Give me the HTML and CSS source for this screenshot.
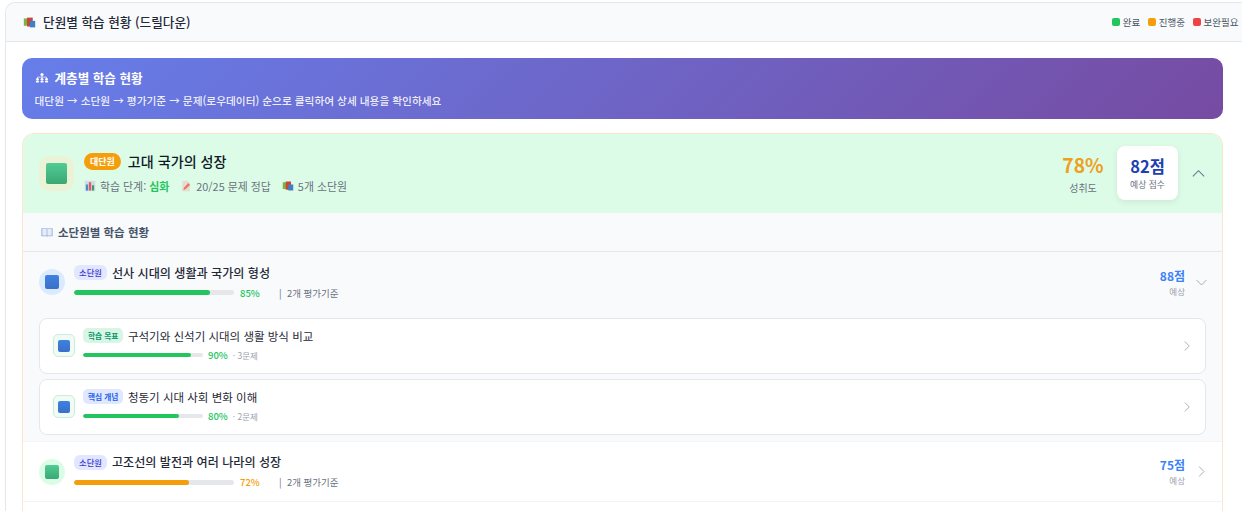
FILE: index.html
```html
<!DOCTYPE html>
<html lang="ko">
<head>
<meta charset="utf-8">
<title>단원별 학습 현황</title>
<link rel="stylesheet" href="styles.css">
</head>
<body>
<svg class="defs" width="0" height="0" aria-hidden="true">
  <symbol id="books" viewBox="0 0 16 16">
    <rect x="1" y="3" width="7" height="9" fill="#7cb342"/>
    <rect x="5" y="2" width="7" height="11" fill="#c8443c"/>
    <rect x="8.500" y="6" width="6.500" height="8" fill="#3f7fc4"/>
  </symbol>
  <symbol id="chart" viewBox="0 0 16 16">
    <rect x="1" y="1" width="14" height="14" rx="1" fill="#d3dbe3"/>
    <rect x="2.500" y="6" width="3" height="8" fill="#3f8fc8"/>
    <rect x="6.500" y="3" width="3" height="11" fill="#dc5a6a"/>
    <rect x="10.500" y="7" width="3" height="7" fill="#3f9d72"/>
  </symbol>
  <symbol id="memo" viewBox="0 0 16 16">
    <path d="M3 1h7l3 3v11H3z" fill="#e4dcd6"/>
    <path d="M4.500 13.500l1-3.500 5.500-6 2.500 2.500-6 5.500z" fill="#ea7a5c"/>
  </symbol>
  <symbol id="book" viewBox="0 0 16 16">
    <path d="M0.500 3h7l.5 .8 .5-.8h7v10.500H9l-1 .8-1-.8H.5z" fill="#8fb4dc"/>
    <path d="M1.800 3.800h5.700v8.700H1.800zM8.500 3.800h5.700v8.700H8.500z" fill="#e9ecf8"/>
  </symbol>
  <symbol id="org" viewBox="0 0 16 16">
    <g fill="#fff">
      <circle cx="8" cy="4" r="1.800"/>
      <circle cx="2.800" cy="9.500" r="1.500"/>
      <circle cx="8" cy="9.500" r="1.500"/>
      <circle cx="13.200" cy="9.500" r="1.500"/>
      <rect x="1" y="11" width="3.600" height="2" rx=".6"/>
      <rect x="6.200" y="11" width="3.600" height="2" rx=".6"/>
      <rect x="11.400" y="11" width="3.600" height="2" rx=".6"/>
    </g>
    <path d="M8 5.500v2.500M2.800 8.500V7h10.400v1.500" fill="none" stroke="#fff" stroke-width=".8"/>
  </symbol>
  <symbol id="up" viewBox="0 0 16 16"><path d="M2 11l6-6 6 6" fill="none" stroke="currentColor" stroke-width="1.100"/></symbol>
  <symbol id="down" viewBox="0 0 16 16"><path d="M2 5l6 6 6-6" fill="none" stroke="currentColor" stroke-width="1.100"/></symbol>
  <symbol id="right" viewBox="0 0 16 16"><path d="M5 2l6 6-6 6" fill="none" stroke="currentColor" stroke-width="1.100"/></symbol>
</svg>

<main class="panel">
  <header class="panel-head">
    <h1 class="panel-title"><svg class="ico-13"><use href="#books"/></svg>단원별 학습 현황 (드릴다운)</h1>
    <ul class="legend">
      <li class="legend-item"><i class="dot dot-green"></i>완료</li>
      <li class="legend-item"><i class="dot dot-orange"></i>진행중</li>
      <li class="legend-item"><i class="dot dot-red"></i>보완필요</li>
    </ul>
  </header>

  <div class="panel-body">
    <section class="banner">
      <h2 class="banner-title"><svg class="ico-14"><use href="#org"/></svg>계층별 학습 현황</h2>
      <p class="banner-sub">대단원 → 소단원 → 평가기준 → 문제(로우데이터) 순으로 클릭하여 상세 내용을 확인하세요</p>
    </section>

    <section class="unit">
      <div class="unit-head">
        <div class="unit-icon"><span class="sq sq-green sq-21"></span></div>
        <div class="unit-info">
          <div class="unit-line">
            <span class="tag-main">대단원</span>
            <h3 class="unit-title">고대 국가의 성장</h3>
          </div>
          <div class="unit-meta">
            <span class="meta-item"><svg class="ico-12"><use href="#chart"/></svg>학습 단계: <b class="level">심화</b></span>
            <span class="meta-item"><svg class="ico-12"><use href="#memo"/></svg>20/25 문제 정답</span>
            <span class="meta-item"><svg class="ico-12"><use href="#books"/></svg>5개 소단원</span>
          </div>
        </div>
        <div class="unit-rate">
          <strong class="rate-num">78%</strong>
          <span class="rate-label">성취도</span>
        </div>
        <div class="score-card">
          <strong class="score-num">82점</strong>
          <span class="score-label">예상 점수</span>
        </div>
        <svg class="chev-main"><use href="#up"/></svg>
      </div>

      <div class="section-head"><svg class="ico-12"><use href="#book"/></svg>소단원별 학습 현황</div>

      <div class="sub sub-open">
        <div class="sub-icon sub-icon-blue"><span class="sq sq-blue sq-14"></span></div>
        <div class="sub-info">
          <div class="sub-line">
            <span class="tag-sub">소단원</span>
            <h4 class="sub-title">선사 시대의 생활과 국가의 형성</h4>
          </div>
          <div class="sub-progress">
            <div class="bar bar-sub"><span class="fill fill-green" style="width:85%"></span></div>
            <span class="pct pct-green">85%</span>
            <span class="sub-count">|&nbsp; 2개 평가기준</span>
          </div>
        </div>
        <div class="sub-score"><strong class="sub-num">88점</strong><span class="sub-label">예상</span></div>
        <svg class="chev-sub"><use href="#down"/></svg>
      </div>

      <div class="items">
        <article class="item">
          <div class="item-icon"><span class="sq sq-blue sq-12"></span></div>
          <div class="item-info">
            <div class="item-line">
              <span class="tag-item tag-goal">학습 목표</span>
              <h5 class="item-title">구석기와 신석기 시대의 생활 방식 비교</h5>
            </div>
            <div class="item-progress">
              <div class="bar bar-item"><span class="fill fill-green" style="width:90%"></span></div>
              <span class="pct-item pct-green">90%</span>
              <span class="item-count">· 3문제</span>
            </div>
          </div>
          <svg class="chev-item"><use href="#right"/></svg>
        </article>
        <article class="item">
          <div class="item-icon"><span class="sq sq-blue sq-12"></span></div>
          <div class="item-info">
            <div class="item-line">
              <span class="tag-item tag-core">핵심 개념</span>
              <h5 class="item-title">청동기 시대 사회 변화 이해</h5>
            </div>
            <div class="item-progress">
              <div class="bar bar-item"><span class="fill fill-green" style="width:80%"></span></div>
              <span class="pct-item pct-green">80%</span>
              <span class="item-count">· 2문제</span>
            </div>
          </div>
          <svg class="chev-item"><use href="#right"/></svg>
        </article>
      </div>

      <div class="sub">
        <div class="sub-icon sub-icon-green"><span class="sq sq-green sq-14"></span></div>
        <div class="sub-info">
          <div class="sub-line">
            <span class="tag-sub">소단원</span>
            <h4 class="sub-title">고조선의 발전과 여러 나라의 성장</h4>
          </div>
          <div class="sub-progress">
            <div class="bar bar-sub"><span class="fill fill-orange" style="width:72%"></span></div>
            <span class="pct pct-orange">72%</span>
            <span class="sub-count">|&nbsp; 2개 평가기준</span>
          </div>
        </div>
        <div class="sub-score"><strong class="sub-num">75점</strong><span class="sub-label">예상</span></div>
        <svg class="chev-sub"><use href="#right"/></svg>
      </div>
    </section>
  </div>
</main>
</body>
</html>
```

FILE: styles.css
```css
* { box-sizing: border-box; margin: 0; padding: 0; }
html, body { height: 511px; overflow: hidden; background: #fff; }
body {
  padding: 2px 0 0 5px;
  font-family: "Noto Sans CJK KR", "Noto Sans", sans-serif;
  color: #1f2937;
}
.defs { position: absolute; }
svg { display: block; flex: none; }
.ico-14 { width: 14px; height: 14px; }
.ico-13 { width: 13px; height: 13px; }
.ico-12 { width: 12px; height: 12px; }

.panel {
  width: 1237px;
  height: 509px;
  display: flex;
  flex-direction: column;
  border: 1px solid #e5e7eb;
  border-width: 1px 0 0 1px;
  border-radius: 10px 0 0 0;
  background: #fff;
}
.panel-head {
  height: 39px;
  flex: none;
  display: flex;
  align-items: center;
  justify-content: space-between;
  padding: 0 3.500px 0 17px;
  background: #f8fafc;
  border-bottom: 1px solid #e5e7eb;
  border-radius: 10px 0 0 0;
}
.panel-title {
  display: flex;
  align-items: center;
  gap: 7px;
  font-size: 12.650px;
  font-weight: 500;
  line-height: 18px;
  color: #1f2937;
}
.legend { display: flex; gap: 7.500px; list-style: none; }
.legend-item {
  display: flex;
  align-items: center;
  gap: 3px;
  font-size: 9.500px;
  line-height: 14px;
  color: #4b5563;
}
.dot { width: 8px; height: 8px; border-radius: 2px; }
.dot-green { background: #22c55e; }
.dot-orange { background: #f59e0b; }
.dot-red { background: #ef4444; }

.panel-body {
  flex: 1;
  min-height: 0;
  display: flex;
  flex-direction: column;
  padding: 16px 19px 0 16px;
}

.banner {
  height: 61px;
  flex: none;
  padding: 10px 12.500px;
  border-radius: 10px;
  background: linear-gradient(135deg, #667eea 0%, #764ba2 100%);
  color: #fff;
}
.banner-title {
  display: flex;
  align-items: center;
  gap: 6px;
  font-size: 12.600px;
  font-weight: 700;
  line-height: 20px;
}
.banner-sub {
  margin-top: 4px;
  font-size: 10.700px;
  font-weight: 500;
  line-height: 18px;
  color: rgba(255, 255, 255, .9);
}

.unit {
  flex: 1;
  min-height: 0;
  margin-top: 14px;
  border: 1px solid #fde6cc;
  border-bottom: 0;
  border-radius: 12px 12px 0 0;
  overflow: hidden;
  background: #fff;
}
.unit-head {
  height: 79px;
  display: flex;
  align-items: center;
  padding: 0 16px 1px;
  background: #dcfce7;
}
.unit-icon {
  width: 35px;
  height: 35px;
  margin-right: 10px;
  display: flex;
  align-items: center;
  justify-content: center;
  border-radius: 10px;
  background: #ebf3d6;
}
.sq { display: block; border-radius: 2px; }
.sq-green { background: linear-gradient(180deg, #52cb94, #3aa873); }
.sq-blue { background: linear-gradient(180deg, #3f82e0, #3b6fc9); }
.sq-21 { width: 21px; height: 21px; }
.sq-14 { width: 14px; height: 14px; }
.sq-12 { width: 12px; height: 12px; }

.unit-info { flex: 1; margin-bottom: 2px; }
.unit-line { display: flex; align-items: center; gap: 7px; }
.tag-main {
  height: 17px;
  padding: 0 6px;
  border-radius: 9px;
  background: #f59e0b;
  color: #fff;
  font-size: 9px;
  font-weight: 700;
  line-height: 17px;
}
.unit-title { font-size: 14.100px; font-weight: 500; line-height: 20px; color: #111827; }
.unit-meta { display: flex; gap: 11px; margin-top: 8px; }
.meta-item {
  display: flex;
  align-items: center;
  gap: 4px;
  font-size: 10.900px;
  line-height: 14px;
  color: #6b7280;
}
.level { margin-left: -1px; color: #22c55e; font-weight: 700; }

.unit-rate { width: 42px; margin-right: 13px; text-align: center; }
.rate-num { display: block; font-size: 19.300px; font-weight: 700; line-height: 24px; color: #eda022; }
.rate-label { display: block; margin-top: 4px; font-size: 10px; line-height: 13px; color: #6b7280; }
.score-card {
  width: 61px;
  height: 54px;
  padding-top: 9px;
  border-radius: 8px;
  background: #fff;
  box-shadow: 0 2px 6px rgba(0, 0, 0, .08);
  text-align: center;
}
.score-num { display: block; font-size: 16.500px; font-weight: 700; line-height: 22px; color: #1e40af; }
.score-label { display: block; margin-top: 2px; font-size: 8.800px; line-height: 12px; color: #6b7280; }
.chev-main { width: 15px; height: 15px; margin-left: 13px; color: #64748b; }

.section-head {
  height: 39px;
  display: flex;
  align-items: center;
  gap: 5px;
  padding-left: 18px;
  background: #f8fafc;
  border-bottom: 1px solid #e5e7eb;
  font-size: 11.500px;
  font-weight: 700;
  color: #475569;
}

.sub {
  height: 60px;
  display: flex;
  align-items: center;
  padding: 0 14px 0 16px;
  border-bottom: 1px solid #f1f5f9;
}
.sub-open { border-bottom: 0; background: #f8fafc; }
.sub-icon {
  width: 26px;
  height: 26px;
  margin-right: 9px;
  display: flex;
  align-items: center;
  justify-content: center;
  border-radius: 50%;
}
.sub-icon-blue { background: #dbeafe; }
.sub-icon-green { background: #dcfce7; }
.sub-info { flex: 1; }
.sub-line { display: flex; align-items: center; gap: 5px; }
.tag-sub {
  height: 15px;
  padding: 0 5px;
  border-radius: 6px;
  background: #e0e7ff;
  color: #4338ca;
  font-size: 8.300px;
  font-weight: 500;
  line-height: 15px;
}
.sub-title { font-size: 12.100px; font-weight: 500; line-height: 16px; color: #1f2937; }
.sub-progress { display: flex; align-items: center; margin-top: 5px; }
.bar { background: #e5e7eb; border-radius: 3px; overflow: hidden; }
.bar-sub { width: 160px; height: 5px; }
.bar-item { width: 120px; height: 4px; }
.fill { display: block; height: 100%; border-radius: 3px; }
.fill-green { background: #22c55e; }
.fill-orange { background: #f59e0b; }
.pct { margin-left: 6px; width: 39px; font-size: 9.500px; font-weight: 500; line-height: 14px; }
.pct-green { color: #22c55e; }
.pct-orange { color: #f59e0b; }
.sub-count { font-size: 9.500px; line-height: 14px; color: #6b7280; }
.sub-score { text-align: right; margin-right: 10px; }
.sub-num { display: block; font-size: 12px; font-weight: 700; line-height: 16px; color: #3b82f6; }
.sub-label { display: block; margin-top: 2px; font-size: 8.500px; line-height: 11px; color: #9ca3af; }
.chev-sub { width: 13px; height: 13px; color: #9ca3af; }

.items {
  display: flex;
  flex-direction: column;
  gap: 5.500px;
  padding: 6px 16px 6.500px;
  background: #f8fafc;
  border-bottom: 1px solid #f1f5f9;
}
.item {
  height: 55.500px;
  display: flex;
  align-items: center;
  padding: 0 12px 0 13px;
  border: 1px solid #e5e7eb;
  border-radius: 8px;
  background: #fff;
}
.item-icon {
  width: 22px;
  height: 23px;
  margin-right: 8px;
  display: flex;
  align-items: center;
  justify-content: center;
  border: 1px solid #c8efd8;
  border-radius: 5px;
  background: #f0fbf5;
}
.item-info { flex: 1; padding-bottom: 2px; }
.item-line { display: flex; align-items: center; gap: 4.500px; }
.tag-item {
  height: 15px;
  padding: 0 5px;
  border-radius: 5px;
  font-size: 7.700px;
  font-weight: 700;
  line-height: 15px;
}
.tag-goal { background: #d8f5e6; color: #059669; }
.tag-core { background: #e0e7ff; color: #2563eb; }
.item-title { font-size: 11.500px; font-weight: 400; line-height: 16px; color: #1f2937; }
.item-progress { display: flex; align-items: center; margin-top: 4px; }
.pct-item { margin-left: 5px; font-size: 9.500px; font-weight: 500; line-height: 14px; }
.item-count { margin-left: 5px; font-size: 8.500px; line-height: 14px; color: #9ca3af; }
.chev-item { width: 12px; height: 12px; color: #9ca3af; }
```
